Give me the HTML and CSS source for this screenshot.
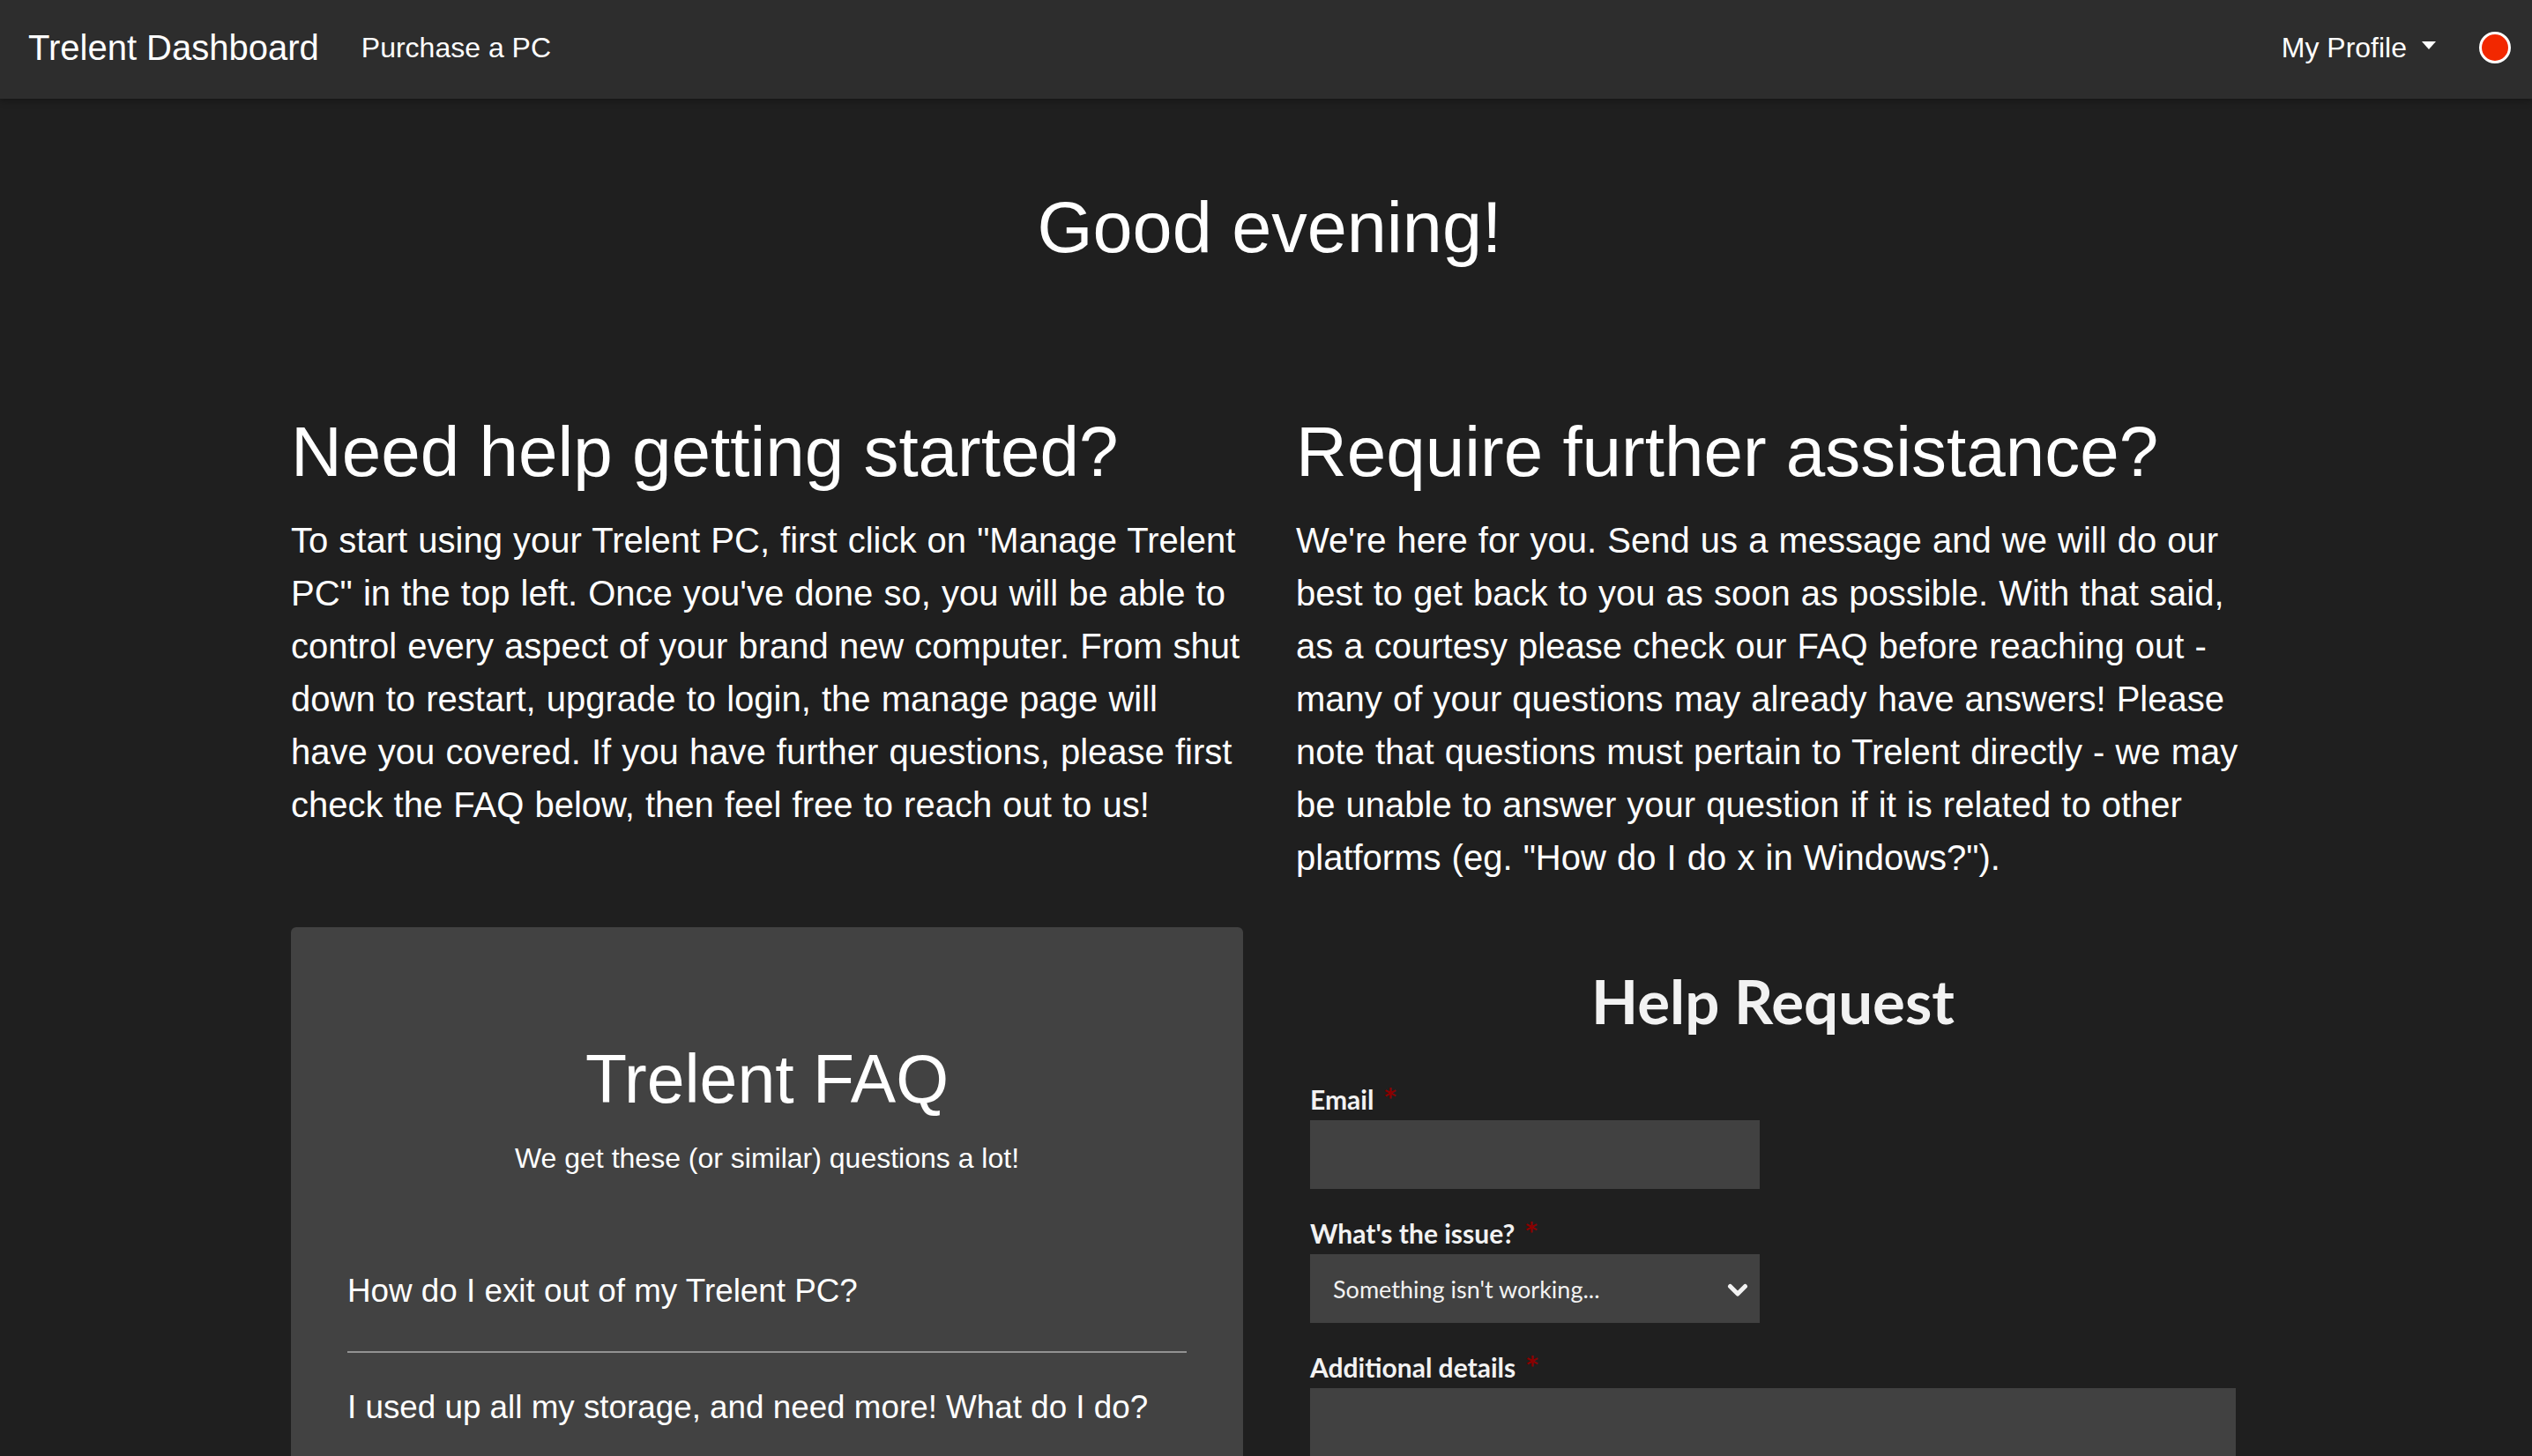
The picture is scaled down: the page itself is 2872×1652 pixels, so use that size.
FILE: index.html
```html
<!DOCTYPE html>
<html lang="en">
<head>
<meta charset="utf-8">
<title>Trelent Dashboard</title>
<link rel="stylesheet" href="styles.css">
</head>
<body>
<nav class="navbar">
  <a class="brand" href="#">Trelent Dashboard</a>
  <a class="nav-link" href="#">Purchase a PC</a>
  <div class="nav-right">
    <a class="profile" href="#">My Profile<span class="caret"></span></a>
    <span class="status-dot"></span>
  </div>
</nav>
<div class="page">
  <main class="container">
    <h1 class="greeting">Good evening!</h1>
    <div class="row">
      <section class="col">
        <h1 class="section-title">Need help getting started?</h1>
        <p class="lead">To start using your Trelent PC, first click on "Manage Trelent PC" in the top left. Once you've done so, you will be able to control every aspect of your brand new computer. From shut down to restart, upgrade to login, the manage page will have you covered. If you have further questions, please first check the FAQ below, then feel free to reach out to us!</p>
      </section>
      <section class="col">
        <h1 class="section-title">Require further assistance?</h1>
        <p class="lead">We're here for you. Send us a message and we will do our best to get back to you as soon as possible. With that said, as a courtesy please check our FAQ before reaching out - many of your questions may already have answers! Please note that questions must pertain to Trelent directly - we may be unable to answer your question if it is related to other platforms (eg. "How do I do x in Windows?").</p>
      </section>
    </div>
    <div class="row">
      <section class="col">
        <div class="faq-card">
          <h2 class="faq-title">Trelent FAQ</h2>
          <p class="faq-sub">We get these (or similar) questions a lot!</p>
          <ul class="faq-list">
            <li class="faq-item">How do I exit out of my Trelent PC?</li>
            <li class="faq-item">I used up all my storage, and need more! What do I do?</li>
          </ul>
        </div>
      </section>
      <section class="col">
        <form class="help-form">
          <h2 class="form-title">Help Request</h2>
          <div class="field">
            <label class="label" for="email">Email<span class="req">*</span></label>
            <input class="input" id="email" type="email">
          </div>
          <div class="field">
            <label class="label" for="issue">What's the issue?<span class="req">*</span></label>
            <div class="select-wrap">
              <select class="select" id="issue">
                <option>Something isn't working...</option>
              </select>
              <svg class="chev" width="24" height="16" viewBox="0 0 24 16"><polyline points="3.5,3.5 12,12 20.5,3.5" fill="none" stroke="#f2f2f2" stroke-width="5" stroke-linecap="round" stroke-linejoin="round"/></svg>
            </div>
          </div>
          <div class="field">
            <label class="label" for="details">Additional details<span class="req">*</span></label>
            <textarea class="textarea" id="details"></textarea>
          </div>
        </form>
      </section>
    </div>
  </main>
</div>
</body>
</html>
```
FILE: styles.css
```css
* { box-sizing: border-box; }
html, body { margin: 0; padding: 0; }
body {
  background: #1f1f1f;
  color: #ffffff;
  font-family: "Liberation Sans", Arial, Helvetica, sans-serif;
  overflow: hidden;
}
a { color: #ffffff; text-decoration: none; }

.navbar {
  height: 112px;
  background: #2d2d2d;
  display: flex;
  align-items: center;
  padding: 0 24px 4px 32px;
  box-shadow: 0 2px 8px rgba(0, 0, 0, 0.35);
  position: relative;
  z-index: 2;
}
.brand { font-size: 40px; line-height: 60px; margin-right: 32px; }
.nav-link { font-size: 32px; line-height: 48px; padding: 0 16px; }
.nav-right { margin-left: auto; display: flex; align-items: center; }
.profile { font-size: 32px; line-height: 48px; display: flex; align-items: center; }
.caret {
  width: 0; height: 0;
  margin-left: 17px;
  margin-bottom: 6px;
  border-top: 9px solid #ffffff;
  border-left: 8.5px solid transparent;
  border-right: 8.5px solid transparent;
}
.status-dot {
  width: 36px; height: 36px;
  border-radius: 50%;
  background: #f22800;
  border: 3px solid #ffffff;
  margin-left: 49px;
}

.page { padding-left: 8px; }
.container { width: 2280px; margin: 0 auto; padding: 0 30px; }

.greeting {
  font-size: 81px; line-height: 96px; font-weight: 400;
  text-align: center;
  margin: 98px 0 159px;
}
.row { display: grid; grid-template-columns: 1fr 1fr; column-gap: 60px; }
.section-title { font-size: 80px; line-height: 96px; font-weight: 400; margin: 0 0 22px; }
.lead { font-size: 40px; line-height: 60px; margin: 0 0 32px; word-spacing: 1px; }

.faq-card {
  background: #424242;
  border-radius: 6px;
  padding: 64px 64px 80px;
  margin-top: 17px;
}
.faq-title { font-size: 77px; line-height: 91px; font-weight: 400; text-align: center; margin: 63px 0 20px; }
.faq-sub { font-size: 32px; line-height: 48px; text-align: center; margin: 0; }
.faq-list { list-style: none; margin: 65px 0 0; padding: 0; }
.faq-item {
  font-size: 36.8px; line-height: 44px;
  padding: 40px 0 46px;
  border-bottom: 2px solid #929292;
}
.faq-item:last-child { border-bottom: none; }

.help-form { padding: 0 14px 0 16px; font-family: Lato, "Open Sans", sans-serif; color: #f2f2f2; }
.form-title { font-size: 69px; line-height: 86px; font-weight: 700; text-align: center; margin: 58px 0 46px; }
.field { margin-bottom: 28px; }
.label { display: block; font-size: 30px; line-height: 44px; font-weight: 700; margin-bottom: 2px; }
.req {
  color: #8b0000;
  margin-left: 12px;
  font-family: "DejaVu Sans", sans-serif;
  font-size: 26px;
  vertical-align: top;
  line-height: 40px;
}
.input, .select, .textarea {
  display: block;
  background: #414141;
  border: none;
  border-radius: 0;
  color: #f2f2f2;
  font-family: Lato, "Open Sans", sans-serif;
  outline: none;
}
.input { width: 510px; height: 78px; }
.select-wrap { position: relative; width: 510px; }
.select {
  width: 510px; height: 78px;
  -webkit-appearance: none; appearance: none;
  padding: 0 0 0 26px;
  font-size: 27px;
}
.chev { position: absolute; right: 13px; top: 33px; pointer-events: none; }
.textarea { width: 100%; height: 260px; resize: none; }
```
